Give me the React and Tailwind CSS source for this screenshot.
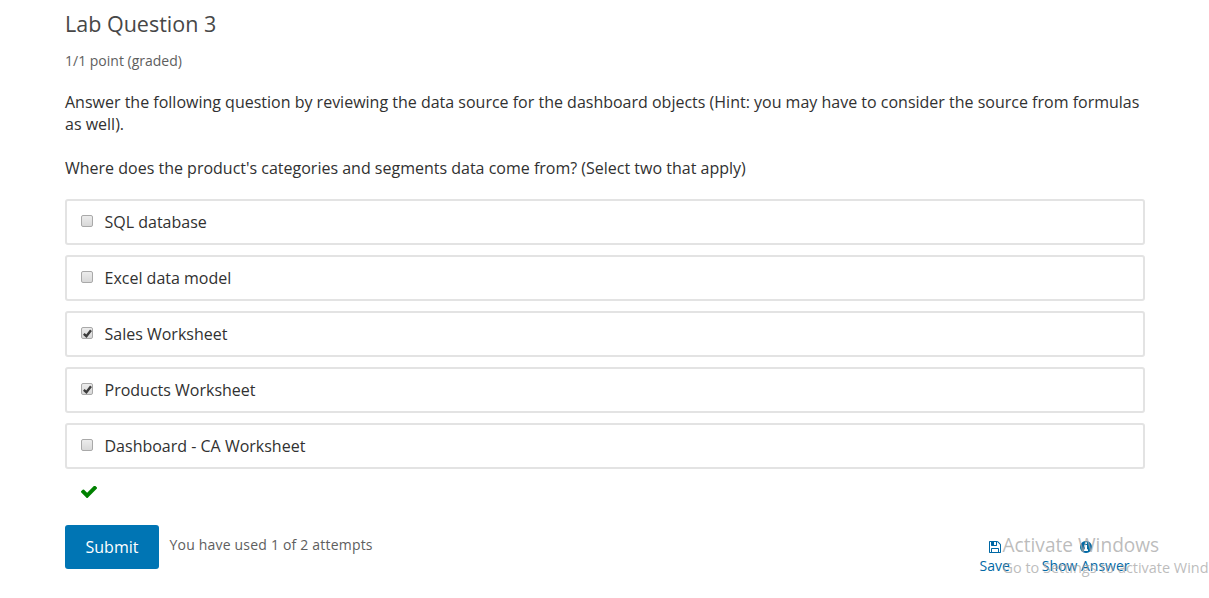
const options = [
  { label: 'SQL database', checked: false },
  { label: 'Excel data model', checked: false },
  { label: 'Sales Worksheet', checked: true },
  { label: 'Products Worksheet', checked: true },
  { label: 'Dashboard - CA Worksheet', checked: false },
];

function CheckIcon({ className }) {
  return (
    <svg viewBox="121 374 1550 1148" fill="currentColor" className={className}>
      <path d="M1671 566q0 40-28 68l-724 724-136 136q-28 28-68 28t-68-28l-136-136-362-362q-28-28-28-68t28-68l136-136q28-28 68-28t68 28l294 295 656-657q28-28 68-28t68 28l136 136q28 28 28 68z" />
    </svg>
  );
}

function SaveIcon({ className }) {
  return (
    <svg viewBox="0 128 1536 1536" fill="currentColor" className={className}>
      <path d="M384 1536h768v-384h-768v384zM1280 1536h128v-896q0-14-10-38.5t-20-34.5l-281-281q-10-10-34-20t-39-10v416q0 40-28 68t-68 28h-576q-40 0-68-28t-28-68v-416h-128v1280h128v-416q0-40 28-68t68-28h832q40 0 68 28t28 68v416zM896 608v-320q0-13-9.5-22.5t-22.5-9.5h-192q-13 0-22.5 9.5t-9.5 22.5v320q0 13 9.5 22.5t22.5 9.5h192q13 0 22.5-9.5t9.5-22.5zM1536 640v928q0 40-28 68t-68 28h-1344q-40 0-68-28t-28-68v-1344q0-40 28-68t68-28h928q40 0 88 20t76 48l280 280q28 28 48 76t20 88z" />
    </svg>
  );
}

function InfoIcon({ className }) {
  return (
    <svg viewBox="128 128 1536 1536" fill="currentColor" className={className}>
      <path d="M1152 1376v-160q0-14-9-23t-23-9h-96v-512q0-14-9-23t-23-9h-320q-14 0-23 9t-9 23v160q0 14 9 23t23 9h96v320h-96q-14 0-23 9t-9 23v160q0 14 9 23t23 9h448q14 0 23-9t9-23zm-128-896v-160q0-14-9-23t-23-9h-192q-14 0-23 9t-9 23v160q0 14 9 23t23 9h192q14 0 23-9t9-23zm640 416q0 209-103 385.5t-279.5 279.5-385.5 103-385.5-103-279.5-279.5-103-385.5 103-385.5 279.5-279.5 385.5-103 385.5 103 279.5 279.5 103 385.5z" />
    </svg>
  );
}

function Checkbox({ checked }) {
  return (
    <span
      role="checkbox"
      aria-checked={checked}
      className="mb-0.5 flex h-3 w-3 items-center justify-center rounded-[2px] border border-[#a9a9a9] bg-linear-to-b from-[#ececec] to-[#d8d8d8]"
    >
      {checked && (
        <svg viewBox="0 0 9 9" className="h-[9px] w-[9px] shrink-0" fill="none" stroke="#3c3c3c" strokeWidth="2.4">
          <path d="M0.8 4.8 L3.4 7.2 L8 1.2" />
        </svg>
      )}
    </span>
  );
}

export default function App() {
  return (
    <div className="relative h-[598px] w-[1209px] overflow-hidden bg-white font-['Open_Sans',sans-serif] text-base leading-[22px] text-[#313131]">
      <main className="ml-[65px] w-[1080px] pt-[9px]">
        <h3 className="text-[21.5px] leading-[30px] text-[#474747]">Lab Question 3</h3>
        <p className="mt-[11px] text-sm leading-[22px] text-[#5e5e5e]">1/1 point (graded)</p>
        <p className="mt-[19px]">
          Answer the following question by reviewing the data source for the dashboard objects (Hint: you may have to consider the source from formulas as well).
        </p>
        <p className="mt-[22px]">
          Where does the product's categories and segments data come from? (Select two that apply)
        </p>
        <div className="mt-5 flex flex-col gap-2.5">
          {options.map((o) => (
            <label key={o.label} className="flex h-[46px] items-center rounded-[3px] border-2 border-[#e3e3e3] pl-3.5">
              <Checkbox checked={o.checked} />
              <span className="ml-[11.5px]">{o.label}</span>
            </label>
          ))}
        </div>
        <div className="flex h-14 pt-[17px] pl-4">
          <CheckIcon className="h-3 w-4 text-[#008100]" />
        </div>
        <div className="flex h-11">
          <button className="h-11 w-[94px] rounded-[3px] bg-[#0075b4] text-white">Submit</button>
          <span className="mt-[9px] ml-[10.5px] text-sm leading-[22px] tracking-[0.014em] text-[#5e5e5e]">You have used 1 of 2 attempts</span>
          <div className="mt-4 mr-[15.5px] ml-auto flex gap-8 text-sm leading-[18px] text-[#0068a5]">
            <button className="flex flex-col items-center">
              <SaveIcon className="h-3 w-3 shrink-0" />
              <span className="mt-1">Save</span>
            </button>
            <button className="flex flex-col items-center">
              <InfoIcon className="h-3 w-3 shrink-0" />
              <span className="mt-1">Show Answer</span>
            </button>
          </div>
        </div>
      </main>
      <div className="pointer-events-none absolute top-[532px] left-[1002.5px] whitespace-nowrap text-[#a6a6a6]/75">
        <div className="text-[19.1px] leading-[26px]">Activate Windows</div>
        <div className="text-[14.45px] leading-5">Go to Settings to activate Windows.</div>
      </div>
    </div>
  );
}
